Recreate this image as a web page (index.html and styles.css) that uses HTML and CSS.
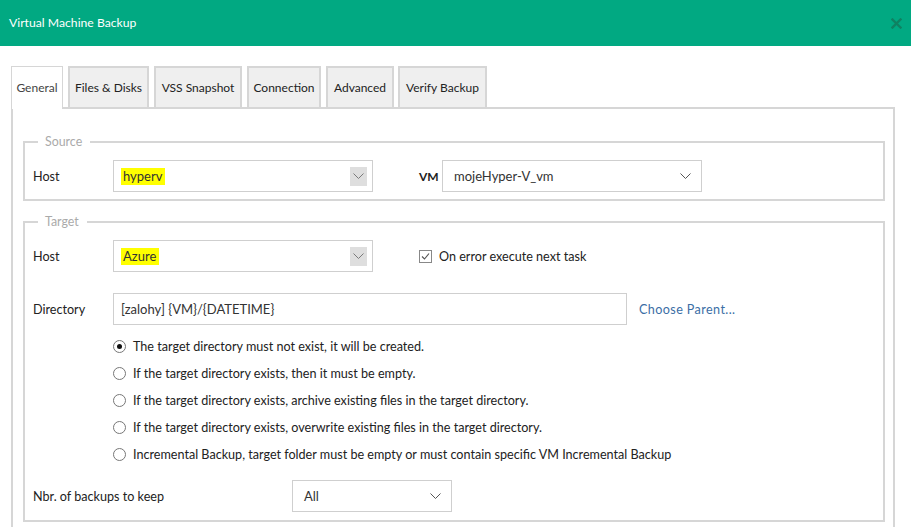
FILE: index.html
```html
<!DOCTYPE html>
<html>
<head>
<meta charset="utf-8">
<link rel="stylesheet" href="styles.css">
</head>
<body>
<div class="header">
  <span class="title">Virtual Machine Backup</span>
  <svg class="close" width="11" height="11" viewBox="0 0 11 11"><path d="M1.5 1.5 L9.5 9.5 M9.5 1.5 L1.5 9.5" stroke="#0f8262" stroke-width="2.4" stroke-linecap="square"/></svg>
</div>
<div class="tabs">
  <div class="tab active t-general">General</div>
  <div class="tab t-files">Files &amp; Disks</div>
  <div class="tab t-vss">VSS Snapshot</div>
  <div class="tab t-conn">Connection</div>
  <div class="tab t-adv">Advanced</div>
  <div class="tab t-verify">Verify Backup</div>
</div>
<div class="panel">
  <fieldset class="group source">
    <legend>Source</legend>
    <div class="row">
      <label class="lbl">Host</label>
      <div class="select">
        <span class="hl">hyperv</span>
        <span class="arrowbox"><svg width="11" height="7" viewBox="0 0 11 7"><path d="M0.5 0.5 L5.5 5.5 L10.5 0.5" fill="none" stroke="#7a7a7a" stroke-width="1"/></svg></span>
      </div>
      <label class="lbl-vm">VM</label>
      <div class="select plain">
        <span class="val">mojeHyper-V_vm</span>
        <svg class="chev" width="11" height="7" viewBox="0 0 11 7"><path d="M0.5 0.5 L5.5 5.5 L10.5 0.5" fill="none" stroke="#555" stroke-width="1"/></svg>
      </div>
    </div>
  </fieldset>
  <fieldset class="group target">
    <legend>Target</legend>
    <div class="row">
      <label class="lbl">Host</label>
      <div class="select">
        <span class="hl">Azure</span>
        <span class="arrowbox"><svg width="11" height="7" viewBox="0 0 11 7"><path d="M0.5 0.5 L5.5 5.5 L10.5 0.5" fill="none" stroke="#7a7a7a" stroke-width="1"/></svg></span>
      </div>
      <div class="check">
        <span class="cbox"><svg width="11" height="11" viewBox="0 0 11 11"><path d="M2 5.5 L4.5 8 L9 2.5" fill="none" stroke="#555" stroke-width="1.1"/></svg></span>
        <span>On error execute next task</span>
      </div>
    </div>
    <div class="row dirrow">
      <label class="lbl">Directory</label>
      <div class="input">[zalohy] {VM}/{DATETIME}</div>
      <a class="link">Choose Parent...</a>
    </div>
    <div class="radios">
      <div class="radio"><span class="rb on"></span><span>The target directory must not exist, it will be created.</span></div>
      <div class="radio"><span class="rb"></span><span>If the target directory exists, then it must be empty.</span></div>
      <div class="radio"><span class="rb"></span><span>If the target directory exists, archive existing files in the target directory.</span></div>
      <div class="radio"><span class="rb"></span><span>If the target directory exists, overwrite existing files in the target directory.</span></div>
      <div class="radio"><span class="rb"></span><span>Incremental Backup, target folder must be empty or must contain specific VM Incremental Backup</span></div>
    </div>
    <div class="row keeprow">
      <label class="lbl wide">Nbr. of backups to keep</label>
      <div class="select plain small">
        <span class="val">All</span>
        <svg class="chev" width="11" height="7" viewBox="0 0 11 7"><path d="M0.5 0.5 L5.5 5.5 L10.5 0.5" fill="none" stroke="#555" stroke-width="1"/></svg>
      </div>
    </div>
  </fieldset>
</div>
</body>
</html>
```
FILE: styles.css
```css
html, body {
  margin: 0;
  padding: 0;
  background: #fff;
  font-family: "Lato", "Open Sans", sans-serif;
  color: #222;
  font-size: 12.6px;
  overflow: hidden;
}
.header {
  height: 46px;
  background: #01a982;
  display: flex;
  align-items: center;
  justify-content: space-between;
  padding: 0 9px 0 9px;
  box-sizing: border-box;
}
.title {
  color: #fff;
  font-size: 12.2px;
  margin-top: -2px;
}
.close {
  margin-top: 1px;
}
.tabs {
  display: flex;
  margin: 20px 0 0 11px;
  height: 41px;
  position: relative;
  z-index: 1;
}
.tab {
  box-sizing: border-box;
  height: 41px;
  background: #efefef;
  border: 2px solid #d6d6d6;
  border-bottom: none;
  display: flex;
  align-items: center;
  justify-content: center;
  font-size: 12px;
  color: #222;
  margin-right: 5px;
}
.tab.active {
  background: #fff;
  border: 1px solid #d6d6d6;
  border-bottom: none;
  height: 43px;
  padding-bottom: 2px;
  color: #444;
}
.t-general { width: 52px; }
.t-files { width: 81px; }
.t-vss { width: 88px; margin-right: 5px; }
.t-conn { width: 74px; }
.t-adv { width: 68px; margin-right: 4px; }
.t-verify { width: 89px; }
.panel {
  margin-left: 11px;
  width: 884px;
  box-sizing: border-box;
  border: 2px solid #d6d6d6;
  border-bottom: none;
  padding: 25px 8px 0 10px;
  height: 420px;
}
.group {
  margin: 0;
  border: 2px solid #d6d6d6;
  padding: 0 8px;
  min-width: 0;
}
.group legend {
  font-size: 12.4px;
  line-height: 16px;
  color: #aaa;
  padding: 0 8px 0 7px;
  margin-left: 5px;
}
.source {
  padding-top: 10px;
  padding-bottom: 7px;
}
.target {
  margin-top: 13px;
  padding-top: 10px;
  padding-bottom: 8px;
}
.row {
  display: flex;
  align-items: center;
}
.lbl {
  width: 80px;
  flex: none;
}
.lbl.wide {
  width: 259px;
}
.select {
  box-sizing: border-box;
  width: 260px;
  height: 32px;
  border: 1px solid #cfcfcf;
  display: flex;
  align-items: center;
  justify-content: space-between;
  padding: 0 5px 0 7px;
  font-size: 13px;
}
.hl {
  background: #ffff00;
  padding: 0 3px 0 2px;
  line-height: 17px;
  color: #333;
}
.arrowbox {
  width: 17px;
  height: 19px;
  background: #dedede;
  display: flex;
  align-items: center;
  justify-content: center;
}
.select.plain {
  padding: 0 10px 0 11px;
  color: #333;
}
.select.small {
  width: 160px;
}
.lbl-vm {
  margin-left: 46px;
  width: 23px;
  font-weight: 700;
  font-size: 12px;
}
.check {
  margin-left: 46px;
  display: flex;
  align-items: center;
  gap: 7px;
}
.cbox {
  box-sizing: border-box;
  width: 13px;
  height: 13px;
  border: 1px solid #888;
  display: flex;
  align-items: center;
  justify-content: center;
}
.dirrow {
  margin-top: 21px;
}
.input {
  box-sizing: border-box;
  width: 514px;
  height: 32px;
  border: 1px solid #cfcfcf;
  display: flex;
  align-items: center;
  padding-left: 7px;
  font-size: 13px;
  color: #333;
}
.link {
  margin-left: 12px;
  color: #3b6ea5;
  letter-spacing: 0.4px;
}
.radios {
  margin-top: 8px;
  padding-left: 80px;
}
.radio {
  height: 27px;
  display: flex;
  align-items: center;
  gap: 7px;
}
.rb {
  box-sizing: border-box;
  width: 13px;
  height: 13px;
  border: 1px solid #777;
  border-radius: 50%;
  display: flex;
  align-items: center;
  justify-content: center;
}
.rb.on::after {
  content: "";
  width: 5px;
  height: 5px;
  border-radius: 50%;
  background: #111;
}
.keeprow {
  margin-top: 12px;
}
```
